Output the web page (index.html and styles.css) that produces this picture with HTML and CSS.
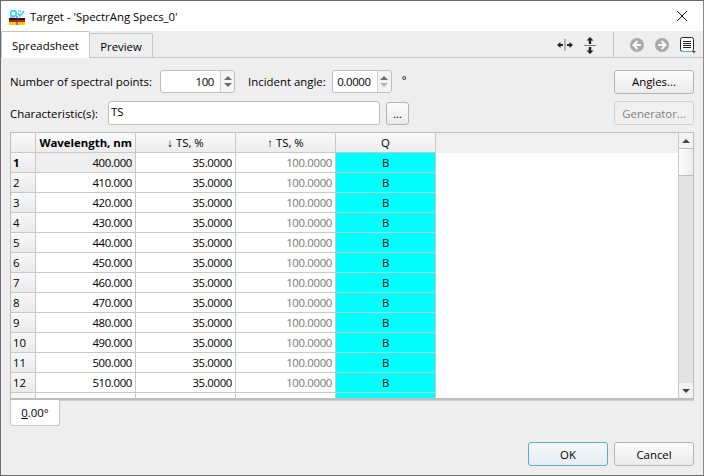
FILE: index.html

```html
<!DOCTYPE html>
<html lang="en">
<head>
<meta charset="utf-8"/>
<title>Target - 'SpectrAng Specs_0'</title>
<link rel="stylesheet" href="styles.css">
</head>
<body>
<div class="window">
    <!-- Title bar -->
    <div class="titlebar">
        <svg class="app-icon" width="16" height="15" viewBox="0 0 16 15">
            <rect width="16" height="8" fill="#fff"/>
            <circle cx="4.5" cy="3.5" r="2.8" fill="none" stroke="#25d8ec" stroke-width="1.5"/>
            <path d="M9 3l2 3 4-5" fill="none" stroke="#25d8ec" stroke-width="1.5"/>
            <path d="M9 1h3M1 7h5" stroke="#7a8fc0" stroke-width="1"/>
            <rect y="8" width="16" height="2" fill="#1a1a1a"/>
            <rect y="10" width="16" height="2" fill="#e01414"/>
            <rect y="12" width="16" height="3" fill="#f4d000"/>
            <path d="M8 6v9" stroke="#2040c0" stroke-width="1"/>
        </svg>
        <span class="title-text">Target - 'SpectrAng Specs_0'</span>
        <svg class="close-icon" width="12" height="12" viewBox="0 0 12 12">
            <path d="M1 1l10 10M11 1L1 11" stroke="#111" stroke-width="1" fill="none"/>
        </svg>
    </div>

    <!-- Tabs and toolbar -->
    <div class="tabbar">
        <div class="tab tab-active">Spreadsheet</div>
        <div class="tab">Preview</div>
        <div class="toolbar">
            <svg width="16" height="14" viewBox="0 0 16 14">
                <path d="M8 1v12" stroke="#777" stroke-width="1"/>
                <path d="M0 7l3.5-3v2H6v2H3.5v2z M16 7l-3.5-3v2H10v2h2.5v2z" fill="#222"/>
            </svg>
            <svg class="tool-v" width="12" height="17" viewBox="0 0 12 17">
                <path d="M0 8.5h12" stroke="#777" stroke-width="1"/>
                <path d="M6 0l3.5 3.5H7.2V7H4.8V3.5H2.500z M6 17l3.5-3.500H7.200V10H4.800v3.500H2.500z" fill="#222"/>
            </svg>
            <div class="tool-sep"></div>
            <svg class="tool-nav" width="14" height="14" viewBox="0 0 14 14">
                <circle cx="7" cy="7" r="7" fill="#a9a9a9"/>
                <path d="M7.5 3L3.500 7l4 4M4 7h7" fill="none" stroke="#fff" stroke-width="2"/>
            </svg>
            <svg class="tool-nav2" width="14" height="14" viewBox="0 0 14 14">
                <circle cx="7" cy="7" r="7" fill="#a9a9a9"/>
                <path d="M6.500 3l4 4-4 4M10 7H3" fill="none" stroke="#fff" stroke-width="2"/>
            </svg>
            <svg class="tool-list" width="18" height="17" viewBox="0 0 18 17">
                <rect x="1.500" y="0.500" width="13" height="14" rx="2" fill="#fff" stroke="#223" stroke-width="1"/>
                <path d="M4 4.500h8M4 6.500h8M4 8.500h8M4 10.500h8" stroke="#222" stroke-width="1"/>
                <path d="M2 14.500h12" stroke="#6aa0d8" stroke-width="1"/>
                <path d="M13 14h4l-2 2.500z" fill="#556"/>
            </svg>
        </div>
    </div>

    <div class="content">
        <div class="form-row row-one">
            <label class="lbl-points">Number of spectral points:</label>
            <div class="spin spin-points">
                <span class="spin-value">100</span>
                <span class="spin-btns"><i class="arrow-up"></i><i class="arrow-down"></i></span>
            </div>
            <label class="lbl-angle">Incident angle:</label>
            <div class="spin spin-angle">
                <span class="spin-value">0.0000</span>
                <span class="spin-btns"><i class="arrow-up"></i><i class="arrow-down dim"></i></span>
            </div>
            <span class="deg">°</span>
            <button class="btn btn-side">Angles...</button>
        </div>
        <div class="form-row row-two">
            <label class="lbl-char">Characteristic(s):</label>
            <div class="text-input">TS</div>
            <button class="btn btn-dots">...</button>
            <button class="btn btn-side btn-disabled">Generator...</button>
        </div>

        <!-- Spreadsheet -->
        <div class="sheet">
            <div class="sheet-view">
                <table class="grid">
                    <thead>
                        <tr>
                            <th class="corner"></th>
                            <th class="col-head bold">Wavelength, nm</th>
                            <th class="col-head center">↓ TS, %</th>
                            <th class="col-head center">↑ TS, %</th>
                            <th class="col-head center">Q</th>
                        </tr>
                    </thead>
                    <tbody>
                        <tr><th class="bold">1</th><td class="current">400.000</td><td>35.0000</td><td class="muted">100.0000</td><td class="q">B</td></tr>
                        <tr><th>2</th><td>410.000</td><td>35.0000</td><td class="muted">100.0000</td><td class="q">B</td></tr>
                        <tr><th>3</th><td>420.000</td><td>35.0000</td><td class="muted">100.0000</td><td class="q">B</td></tr>
                        <tr><th>4</th><td>430.000</td><td>35.0000</td><td class="muted">100.0000</td><td class="q">B</td></tr>
                        <tr><th>5</th><td>440.000</td><td>35.0000</td><td class="muted">100.0000</td><td class="q">B</td></tr>
                        <tr><th>6</th><td>450.000</td><td>35.0000</td><td class="muted">100.0000</td><td class="q">B</td></tr>
                        <tr><th>7</th><td>460.000</td><td>35.0000</td><td class="muted">100.0000</td><td class="q">B</td></tr>
                        <tr><th>8</th><td>470.000</td><td>35.0000</td><td class="muted">100.0000</td><td class="q">B</td></tr>
                        <tr><th>9</th><td>480.000</td><td>35.0000</td><td class="muted">100.0000</td><td class="q">B</td></tr>
                        <tr><th>10</th><td>490.000</td><td>35.0000</td><td class="muted">100.0000</td><td class="q">B</td></tr>
                        <tr><th>11</th><td>500.000</td><td>35.0000</td><td class="muted">100.0000</td><td class="q">B</td></tr>
                        <tr><th>12</th><td>510.000</td><td>35.0000</td><td class="muted">100.0000</td><td class="q">B</td></tr>
                        <tr><th></th><td></td><td></td><td></td><td class="q"></td></tr>
                    </tbody>
                </table>
            </div>
            <div class="scrollbar">
                <div class="sb-btn"><i class="arrow-up dark"></i></div>
                <div class="sb-thumb"></div>
                <div class="sb-track"></div>
                <div class="sb-btn"><i class="arrow-down dark"></i></div>
            </div>
        </div>
        <div class="bottom-tabs">
            <div class="btab"><u>0</u>.00°</div>
        </div>
    </div>

    <div class="footer">
        <button class="btn btn-ok">OK</button>
        <button class="btn btn-cancel">Cancel</button>
    </div>
</div>
</body>
</html>
```

FILE: styles.css

```css
* {
    box-sizing: border-box;
}

html, body {
    margin: 0;
    padding: 0;
}

body {
    width: 704px;
    height: 476px;
    overflow: hidden;
    font-family: "Open Sans", "Noto Sans", sans-serif;
    font-size: 11.4px;
    color: #000;
    background-color: #eeeeee;
}

.window {
    width: 704px;
    height: 476px;
    display: flex;
    flex-direction: column;
    border: 1px solid #6b6b6b;
    border-right-color: #8a8a8a;
    background-color: #eeeeee;
}

/* Title bar */
.titlebar {
    height: 30px;
    flex: none;
    display: flex;
    align-items: center;
    background-color: #fff;
    padding: 0 15px 0 8px;
}

.app-icon {
    margin-top: 2px;
}

.title-text {
    margin-left: 5px;
    flex: 1;
}

/* Tab bar */
.tabbar {
    height: 27px;
    flex: none;
    display: flex;
    align-items: flex-end;
    border-bottom: 1px solid #c4c4c4;
    padding-top: 1px;
}

.tab {
    height: 24px;
    width: 64px;
    margin-left: -1px;
    padding-top: 1px;
    display: flex;
    align-items: center;
    justify-content: center;
    background-color: #eeeeee;
    border: 1px solid #c4c4c4;
    border-bottom: none;
    border-radius: 2px 2px 0 0;
    position: relative;
}

.tab-active {
    height: 27px;
    width: 89px;
    margin-left: 0;
    margin-bottom: -1px;
    padding-top: 0;
    background-color: #fff;
    z-index: 1;
}

.toolbar {
    margin-left: auto;
    height: 25px;
    display: flex;
    align-items: center;
    padding-right: 6px;
    padding-top: 1px;
}

.tool-v {
    margin-left: 11px;
}

.tool-sep {
    width: 1px;
    height: 25px;
    margin: -1px 16px 0 17px;
    background-color: #c4c4c4;
}

.tool-nav2 {
    margin-left: 11px;
}

.tool-list {
    margin-left: 10px;
}

/* Form rows */
.content {
    flex: 1;
    display: flex;
    flex-direction: column;
    padding: 12px 9px 0 9px;
}

.form-row {
    display: flex;
    align-items: center;
    height: 23px;
}

.row-two {
    margin-top: 8px;
    height: 24px;
}

.spin {
    height: 23px;
    background-color: #fff;
    border: 1px solid #bdbdbd;
    border-radius: 3px;
    display: flex;
}

.spin-points {
    width: 75px;
    margin-left: 8px;
}

.spin-angle {
    width: 60px;
    margin-left: 6px;
}

.spin-value {
    flex: 1;
    text-align: right;
    line-height: 21px;
    padding-right: 6px;
    letter-spacing: -0.35px;
}

.spin-btns {
    width: 14px;
    border-left: 1px solid #d0d0d0;
    background-color: #f4f4f4;
    display: flex;
    flex-direction: column;
    align-items: center;
    justify-content: center;
    gap: 3px;
    border-radius: 0 3px 3px 0;
}

.arrow-up, .arrow-down {
    display: block;
    width: 0;
    height: 0;
    border-left: 4px solid transparent;
    border-right: 4px solid transparent;
}

.arrow-up {
    border-bottom: 4px solid #6e6e6e;
}

.arrow-down {
    border-top: 4px solid #6e6e6e;
}

.arrow-down.dim {
    border-top-color: #b0b0b0;
}

.arrow-up.dark {
    border-bottom-color: #444;
}

.arrow-down.dark {
    border-top-color: #444;
}

.lbl-angle {
    margin-left: 13px;
}

.deg {
    margin-left: 10px;
    margin-top: -4px;
}

.text-input {
    width: 272px;
    height: 24px;
    margin-left: 10px;
    background-color: #fff;
    border: 1px solid #bdbdbd;
    border-radius: 3px;
    padding-left: 2px;
    line-height: 20px;
}

/* Buttons */
.btn {
    font-family: inherit;
    font-size: 11.4px;
    color: #000;
    padding: 0;
    background: linear-gradient(#fbfbfb, #ececec);
    border: 1px solid #b4b4b4;
    border-radius: 3px;
}

.btn-side {
    width: 80px;
    height: 24px;
    margin-left: auto;
}

.btn-disabled {
    color: #808080;
    border-color: #d0d0d0;
    background: #f0f0f0;
}

.btn-dots {
    width: 23px;
    height: 23px;
    margin-left: 6px;
}

.btn-ok {
    width: 80px;
    height: 24px;
    border-color: #5aa9e6;
    background: linear-gradient(#f6fafd, #e6ecf1);
}

.btn-cancel {
    width: 80px;
    height: 24px;
    margin-left: 6px;
}

/* Spreadsheet */
.sheet {
    margin-top: 7px;
    height: 268px;
    flex: none;
    display: flex;
    border: 1px solid #bdbdbd;
    border-width: 1px 1px 2px 1px;
    background-color: #fff;
}

.sheet-view {
    flex: 1;
    overflow: hidden;
    background: linear-gradient(#f0f0f0 20px, #fff 20px);
}

.grid {
    border-collapse: separate;
    border-spacing: 0;
    table-layout: fixed;
    width: 425px;
}

.grid th, .grid td {
    height: 20px;
    padding: 0 3px;
    font-weight: normal;
    border-right: 1px solid #c8c8c8;
    border-bottom: 1px solid #c8c8c8;
    white-space: nowrap;
    overflow: hidden;
}

.grid thead th {
    background: linear-gradient(#fafafa, #ececec);
    text-align: right;
}

.grid thead .center {
    text-align: center;
}

.grid .bold {
    font-weight: bold;
}

.grid .corner {
    width: 25px;
}

.grid .col-head {
    width: 100px;
}

.grid tbody th {
    text-align: left;
    padding-left: 2px;
    background: linear-gradient(#f8f8f8, #eaeaea);
}

.grid tbody .bold {
    font-weight: bold;
}

.grid td {
    text-align: right;
    letter-spacing: -0.35px;
}

.grid td.current {
    background-color: #efefef;
}

.grid td.muted {
    color: #777;
}

.grid td.q {
    background-color: #00ffff;
    text-align: center;
}

.scrollbar {
    width: 15px;
    flex: none;
    display: flex;
    flex-direction: column;
    border-left: 1px solid #c8c8c8;
    background-color: #e4e4e4;
}

.sb-btn {
    height: 15px;
    flex: none;
    background-color: #f4f4f4;
    display: flex;
    align-items: center;
    justify-content: center;
}

.sb-thumb {
    height: 28px;
    flex: none;
    background: linear-gradient(90deg, #fdfdfd, #ececec);
    border-top: 1px solid #bdbdbd;
    border-bottom: 1px solid #bdbdbd;
}

.sb-track {
    flex: 1;
}

/* Angle tabs under the table */
.bottom-tabs {
    display: flex;
    border-top: 1px solid #cfcfcf;
}

.btab {
    width: 50px;
    height: 26px;
    margin-top: -1px;
    background-color: #fff;
    border: 1px solid #c4c4c4;
    border-top: none;
    border-radius: 0 0 3px 3px;
    text-align: center;
    line-height: 26px;
}

/* OK / Cancel */
.footer {
    height: 34px;
    flex: none;
    display: flex;
    justify-content: flex-end;
    padding: 1px 9px 0 0;
}
```
